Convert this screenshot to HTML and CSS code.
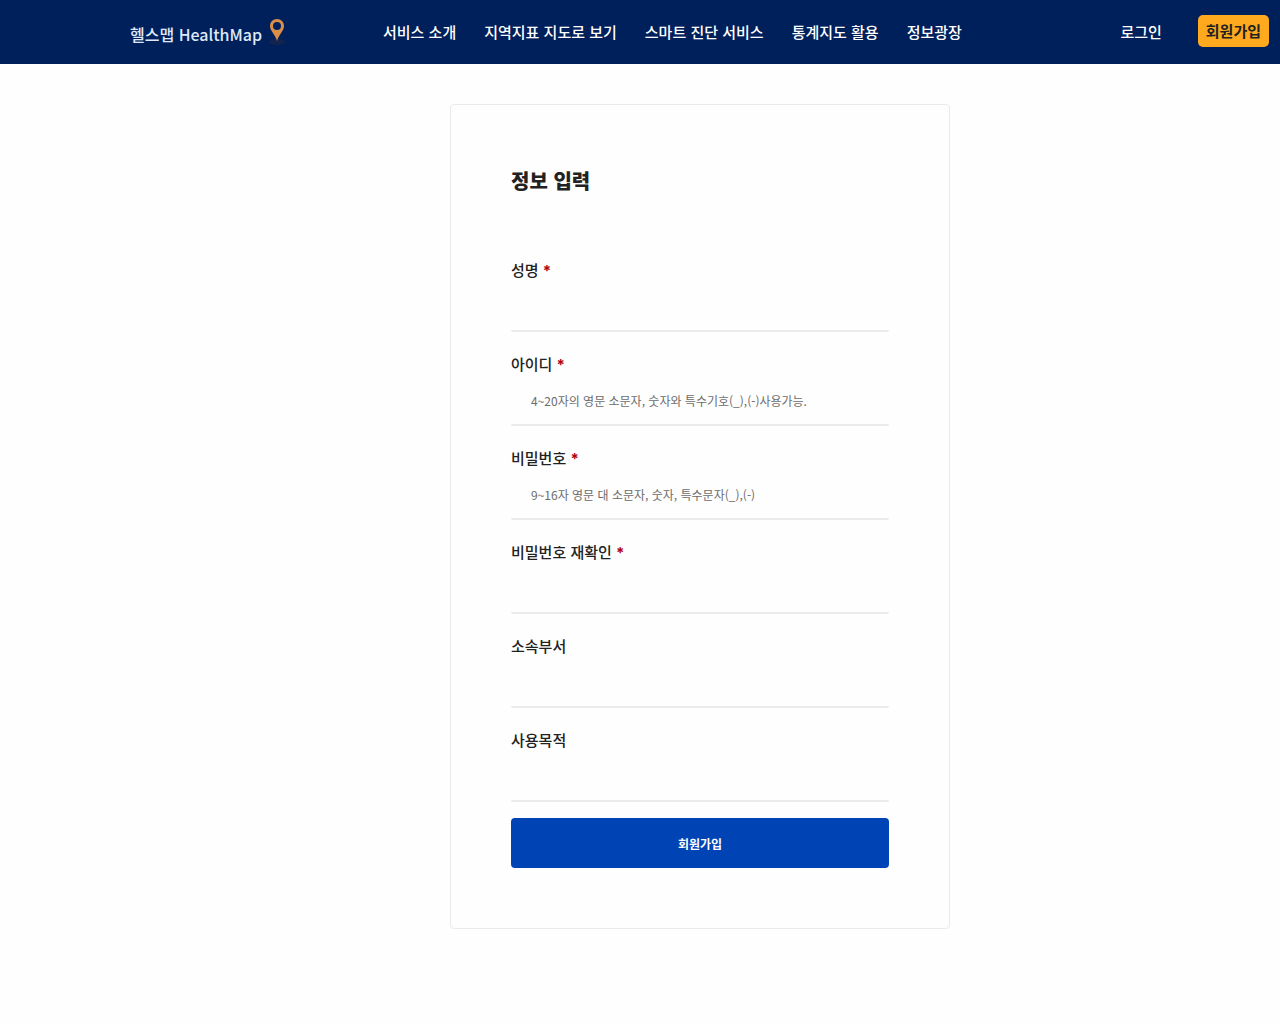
FILE: index.html
```html
<!DOCTYPE html>
<html lang="ko">
<head>
    <meta charset="UTF-8">
    <meta name="viewport" content="width=device-width, initial-scale=1.0">
    <title>헬스맵 HealthMap</title>
    <link rel="stylesheet" href="styles.css">
</head>
<body>
    <header class="header">
        <a class="logo" href="#">
            <span>헬스맵 HealthMap</span>
            <svg class="pin" width="18" height="30" viewBox="0 0 18 30" aria-hidden="true">
                <ellipse cx="9" cy="26" rx="8" ry="3" fill="#14244f"/>
                <path fill="#d98f4a" fill-rule="evenodd" d="M9 3C5 3 2 6 2 10c0 5 5 8 7 15 2-7 7-10 7-15 0-4-3-7-7-7zm0 3a4 4 0 1 1 0 8 4 4 0 0 1 0-8z"/>
            </svg>
        </a>
        <nav class="menu">
            <a href="#">서비스 소개</a>
            <a href="#">지역지표 지도로 보기</a>
            <a href="#">스마트 진단 서비스</a>
            <a href="#">통계지도 활용</a>
            <a href="#">정보광장</a>
        </nav>
        <div class="member">
            <a href="#">로그인</a>
            <a class="join" href="#">회원가입</a>
        </div>
    </header>

    <main class="content">
        <form class="card">
            <h1>정보 입력</h1>
            <div class="field">
                <label for="name">성명 <em>*</em></label>
                <input type="text" id="name">
            </div>
            <div class="field">
                <label for="userid">아이디 <em>*</em></label>
                <input type="text" id="userid" placeholder="4~20자의 영문 소문자, 숫자와 특수기호(_),(-)사용가능.">
            </div>
            <div class="field">
                <label for="pw">비밀번호 <em>*</em></label>
                <input type="password" id="pw" placeholder="9~16자 영문 대 소문자, 숫자, 특수문자(_),(-)">
            </div>
            <div class="field">
                <label for="pw2">비밀번호 재확인 <em>*</em></label>
                <input type="password" id="pw2">
            </div>
            <div class="field">
                <label for="dept">소속부서</label>
                <input type="text" id="dept">
            </div>
            <div class="field">
                <label for="purpose">사용목적</label>
                <input type="text" id="purpose">
            </div>
            <button type="submit" class="submit">회원가입</button>
        </form>
    </main>
</body>
</html>
```

FILE: styles.css
```css
*{
    box-sizing: border-box;
}
body{
    margin: 0;
    background-color: #fefefe;
    color: #222;
    font-family: "Noto Sans CJK KR", sans-serif;
    font-size: 15px;
}
a{
    color: inherit;
    text-decoration: none;
}
.header{
    display: flex;
    align-items: center;
    height: 64px;
    padding: 0 11px 2px 130px;
    background-color: #00205b;
    color: #fff;
    font-weight: 500;
    white-space: nowrap;
}
.logo{
    display: flex;
    align-items: center;
    gap: 6px;
    width: 253px;
    color: #dfe8fa;
    font-size: 16px;
}
.logo span{
    padding-top: 6px;
}
.menu{
    display: flex;
    gap: 28px;
}
.member{
    display: flex;
    align-items: center;
    gap: 36px;
    margin-left: auto;
}
.join{
    padding: 0 8px;
    border-radius: 5px;
    background-color: #ffa91f;
    color: #222;
    font-weight: 700;
    line-height: 32px;
}
.content{
    padding: 40px 0 40px 120px;
}
.card{
    max-width: 500px;
    margin: 0 auto;
    padding: 60px;
    border: 1px solid #eaeaea;
    border-radius: 4px;
}
.card h1{
    margin: 0 0 61px;
    font-size: 20px;
    font-weight: 900;
    line-height: 32px;
}
.field{
    margin-bottom: 20px;
}
.field label{
    display: block;
    font-weight: 500;
    line-height: 24px;
}
.field em{
    color: #b00010;
    font-family: Inter, sans-serif;
    font-style: normal;
    font-weight: 700;
    line-height: 1;
}
.field input{
    display: block;
    width: 100%;
    height: 50px;
    padding: 0 20px;
    border: 0;
    border-bottom: 2px solid #ebebeb;
    border-radius: 2px;
    background-color: transparent;
    font-family: inherit;
    font-size: 12px;
}
.field input::placeholder{
    color: #6c6c6c;
}
.field:last-of-type{
    margin-bottom: 16px;
}
.submit{
    display: block;
    width: 100%;
    height: 50px;
    border: 0;
    border-radius: 4px;
    background-color: #0043b5;
    color: #fff;
    font-family: inherit;
    font-size: 12px;
    font-weight: 700;
    cursor: pointer;
}
```
